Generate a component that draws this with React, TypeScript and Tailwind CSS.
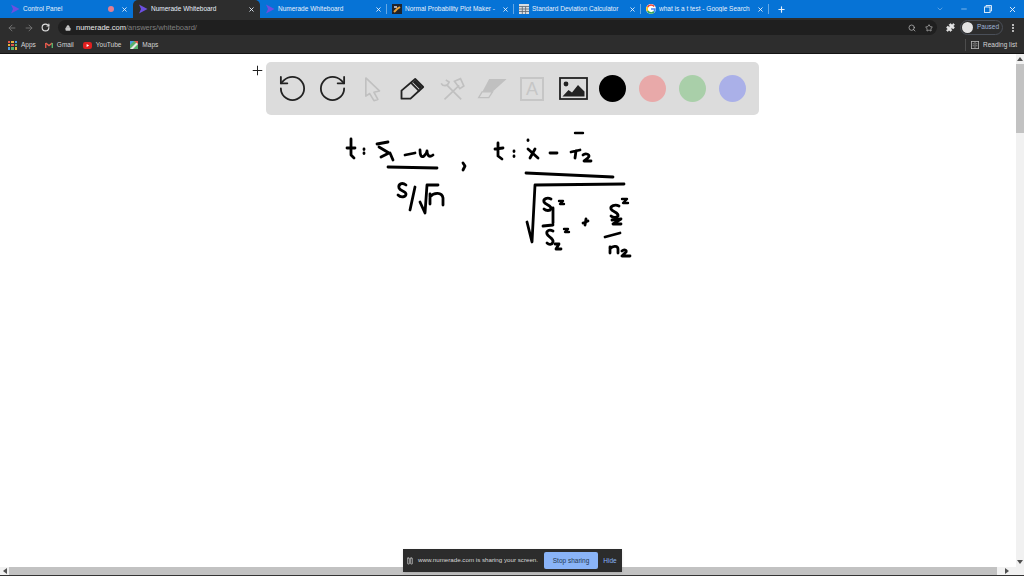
import { ArrowLeft, ArrowRight, ChevronDown, Minus, Plus, RotateCcw, RotateCw, Search, Star, X, Lock, Puzzle, EllipsisVertical, Pause } from "lucide-react";
import type { ReactNode } from "react";

type Tab = { title: string; icon: "numerade" | "plot" | "sheet" | "google"; active?: boolean; width: string; muted?: boolean; divider?: boolean };

const tabs: Tab[] = [
  { title: "Control Panel", icon: "numerade", width: "w-[128px]", muted: true },
  { title: "Numerade Whiteboard", icon: "numerade", width: "w-[127px]", active: true },
  { title: "Numerade Whiteboard", icon: "numerade", width: "w-[127px]", divider: true },
  { title: "Normal Probability Plot Maker -", icon: "plot", width: "w-[127px]", divider: true },
  { title: "Standard Deviation Calculator", icon: "sheet", width: "w-[127px]", divider: true },
  { title: "what is a t test - Google Search", icon: "google", width: "w-[128px]", divider: true },
];

function TabIcon({ icon }: { icon: Tab["icon"] }) {
  if (icon === "numerade") {
    return (
      <svg viewBox="0 0 10 10" className="h-[10px] w-[10px] shrink-0">
        <path d="M1 0.5 9.5 5 1 9.5 3 5Z" fill="#6d4fe0" />
      </svg>
    );
  }
  if (icon === "plot") {
    return (
      <svg viewBox="0 0 10 10" className="h-[10px] w-[10px] shrink-0">
        <rect width="10" height="10" fill="#20242c" />
        <path d="M2 8 5 5 8 3" stroke="#e9a23b" strokeWidth="2" fill="none" />
        <path d="M2 3h3" stroke="#d9d9e6" strokeWidth="1.5" />
      </svg>
    );
  }
  if (icon === "sheet") {
    return (
      <svg viewBox="0 0 10 10" className="h-[10px] w-[10px] shrink-0">
        <rect width="10" height="10" fill="#d8dde2" />
        <path d="M0 2.5h10M0 5h10M0 7.5h10M3.3 2.5v7.5M6.6 2.5v7.5" stroke="#5c6670" strokeWidth="0.8" />
      </svg>
    );
  }
  return (
    <svg viewBox="0 0 10 10" className="h-[10px] w-[10px] shrink-0">
      <circle cx="5" cy="5" r="5" fill="#fff" />
      <path d="M8.2 2.4A4 4 0 0 0 1.6 3" stroke="#ea4335" strokeWidth="1.6" fill="none" />
      <path d="M1.6 3a4 4 0 0 0 0 4" stroke="#fbbc05" strokeWidth="1.6" fill="none" />
      <path d="M1.6 7a4 4 0 0 0 6.4.6" stroke="#34a853" strokeWidth="1.6" fill="none" />
      <path d="M8 7.6A4 4 0 0 0 9 5H5" stroke="#4285f4" strokeWidth="1.6" fill="none" />
    </svg>
  );
}

function TabBar() {
  return (
    <div className="flex h-[18px] items-stretch bg-[#0673d6] pl-[5px] text-[6.5px] text-[#e8f1fb]">
      {tabs.map((tab, i) => (
        <div
          key={i}
          className={
            tab.active
              ? "flex items-center gap-[3px] rounded-t-[5px] bg-[#2d2d2d] pl-[5px] pr-[5px] " + tab.width
              : "relative flex items-center gap-[3px] pl-[5px] pr-[5px] " + tab.width
          }
        >
          <TabIcon icon={tab.icon} />
          <span className="min-w-0 flex-1 truncate leading-none">{tab.title}</span>
          {tab.muted && <span className="mr-[4px] h-[6px] w-[6px] rounded-full bg-[#e07f92]" />}
          <X size={7} strokeWidth={3} className="shrink-0" />
          {tab.divider && <span className="absolute right-0 top-[4px] h-[10px] w-px bg-[#66a9e6]" />}
        </div>
      ))}
      <div className="flex w-[24px] items-center justify-center">
        <Plus size={9} strokeWidth={3} />
      </div>
      <div className="flex-1" />
      <div className="flex w-[96px] shrink-0 items-center">
        <div className="flex w-[24px] justify-center">
          <ChevronDown size={8} className="text-[#7db5ea]" />
        </div>
        <div className="flex w-[24px] justify-center">
          <Minus size={8} className="text-[#b9d8f5]" />
        </div>
        <div className="flex w-[24px] justify-center">
          <svg viewBox="0 0 8 8" className="h-[8px] w-[8px]" fill="none" stroke="#d6e8f9" strokeWidth="1">
            <rect x="0.5" y="2" width="5.5" height="5.5" />
            <path d="M2 2V0.5H7.5V6H6" />
          </svg>
        </div>
        <div className="flex w-[24px] justify-center">
          <X size={9} strokeWidth={2.5} />
        </div>
      </div>
    </div>
  );
}

function AddressBar() {
  return (
    <div className="flex h-[19px] items-center bg-[#2d2d2d] pl-[7px] pr-[6px] text-[#c8c8c8]">
      <div className="flex w-[51px] shrink-0 items-center gap-[7px]">
        <ArrowLeft size={10} className="text-[#7c7c7c]" />
        <ArrowRight size={10} className="text-[#7c7c7c]" />
        <RotateCw size={9} strokeWidth={3} className="text-[#e0e0e0]" />
      </div>
      <div className="flex h-[15px] min-w-0 flex-1 items-center justify-between rounded-full bg-[#1f1f1f] pl-[7px] pr-[4px] text-[7.5px]">
        <div className="flex items-center gap-[5px]">
          <Lock size={6} fill="currentColor" />
          <span className="leading-none">
            <span className="text-[#e8e8e8]">numerade.com</span>
            <span className="text-[#7f7f7f]">/answers/whiteboard/</span>
          </span>
        </div>
        <div className="flex items-center gap-[9px]">
          <Search size={8} />
          <Star size={8} />
        </div>
      </div>
      <div className="ml-[9px] flex items-center gap-[5px]">
        <Puzzle size={9} fill="#e4e4e4" className="text-[#e4e4e4]" />
        <div className="flex h-[15px] w-[43px] items-center gap-[4px] rounded-full border border-[#4a4f58] pl-[1px] text-[6.5px] text-[#9fb4d8]">
          <span className="h-[11px] w-[11px] rounded-full bg-[#e4e4e4]" />
          <span className="leading-none">Paused</span>
        </div>
        <EllipsisVertical size={10} strokeWidth={3} className="text-[#e4e4e4]" />
      </div>
    </div>
  );
}

function Bookmark({ icon, label }: { icon: ReactNode; label: string }) {
  return (
    <div className="flex items-center gap-[4px]">
      {icon}
      <span className="leading-none">{label}</span>
    </div>
  );
}

function BookmarksBar() {
  return (
    <div className="flex h-[17px] items-center gap-[9px] border-b border-[#141414] bg-[#2d2d2d] pl-[8px] pr-[7px] text-[6.5px] text-[#d4d4d4]">
      <Bookmark
        label="Apps"
        icon={
          <div className="grid h-[9px] w-[9px] grid-cols-3 gap-[1px]">
            {["#e0554a", "#e8b23c", "#4a9ae0", "#e8b23c", "#e0554a", "#58b06a", "#4a9ae0", "#58b06a", "#e8b23c"].map((c, i) => (
              <span key={i} style={{ backgroundColor: c }} />
            ))}
          </div>
        }
      />
      <Bookmark
        label="Gmail"
        icon={
          <svg viewBox="0 0 8 6" className="h-[6px] w-[8px]" fill="none" strokeWidth="1.4">
            <path d="M.7 6V1" stroke="#e0554a" />
            <path d="M.7 1 4 3.6 7.3 1" stroke="#e8604f" />
            <path d="M7.3 1v5" stroke="#58b06a" />
          </svg>
        }
      />
      <Bookmark
        label="YouTube"
        icon={
          <svg viewBox="0 0 9 7" className="h-[7px] w-[9px]">
            <rect width="9" height="7" rx="2.2" fill="#e02020" />
            <path d="M3.6 2 6.2 3.5 3.6 5Z" fill="#fff" />
          </svg>
        }
      />
      <Bookmark
        label="Maps"
        icon={
          <svg viewBox="0 0 8 8" className="h-[8px] w-[8px]">
            <rect width="8" height="8" fill="#58b06a" />
            <path d="M0 8 8 0V3L3 8Z" fill="#e8e8e8" />
            <path d="M4 0H8V3Z" fill="#e0554a" />
            <path d="M0 0H4L0 4Z" fill="#4a9ae0" />
          </svg>
        }
      />
      <div className="flex-1" />
      <div className="flex h-[12px] items-center gap-[4px] border-l border-[#4c4c4c] pl-[5px]">
        <svg viewBox="0 0 10 10" className="h-[8px] w-[8px]">
          <rect x="0.5" y="0.5" width="9" height="9" fill="none" stroke="#b8b8b8" />
          <path d="M5 1v8M2 3.5h2M6 3.5h2M2 6h2M6 6h2" stroke="#b8b8b8" strokeWidth="0.8" />
        </svg>
        <span className="leading-none">Reading list</span>
      </div>
    </div>
  );
}

function ToolCell({ children }: { children: ReactNode }) {
  return <div className="flex h-[30px] w-[40px] items-center justify-center">{children}</div>;
}

function Toolbar() {
  const faded = "#c0c0c0";
  return (
    <div className="flex h-[53px] w-[493px] items-center rounded-[5px] bg-[#dcdcdc] pl-[6px]">
      <ToolCell>
        <RotateCcw size={31} strokeWidth={1.4} className="text-[#222]" />
      </ToolCell>
      <ToolCell>
        <RotateCw size={31} strokeWidth={1.4} className="text-[#222]" />
      </ToolCell>
      <ToolCell>
        <svg viewBox="350 60 60 80" className="h-[26px] w-[20px]" fill="none" stroke={faded} strokeWidth="5" strokeLinejoin="round">
          <path d="M361 66 403 106 386 110 398 132 386 136 373 114 361 122Z" />
        </svg>
      </ToolCell>
      <ToolCell>
        <svg viewBox="462 62 80 78" className="h-[26px] w-[27px]" fill="none" stroke="#222" strokeWidth="5.5" strokeLinejoin="round">
          <path d="M469 130V106L510 71 534 95 496 130Z" />
          <path d="M497 82 523 108" />
          <path d="M510 74 531 95 524 102 503 81Z" fill="#222" stroke="none" />
        </svg>
      </ToolCell>
      <ToolCell>
        <svg viewBox="582 62 80 78" className="h-[26px] w-[27px]" fill="none" stroke={faded} strokeWidth="5">
          <path d="M606 90 648 132M642 90 598 132" />
          <path d="M588 84C592 92 606 96 612 80L602 74" />
          <path d="M628 78 646 70 656 92 644 100Z" />
        </svg>
      </ToolCell>
      <ToolCell>
        <svg viewBox="700 66 92 68" className="h-[23px] w-[31px]">
          <path d="M736 72H788L746 110H716Z" fill={faded} />
          <path d="M715 110H746L735 127H705Z" fill="none" stroke={faded} strokeWidth="4" />
        </svg>
      </ToolCell>
      <ToolCell>
        <div className="flex h-[24px] w-[24px] items-center justify-center border-2 border-[#c6c6c6] font-['Liberation_Sans',sans-serif] text-[18px] leading-none text-[#c6c6c6]">
          A
        </div>
      </ToolCell>
      <ToolCell>
        <svg viewBox="0 0 29 23" className="ml-[2px] h-[23px] w-[29px]" fill="none">
          <rect x="1" y="1" width="27" height="21" stroke="#222" strokeWidth="1.8" />
          <circle cx="7" cy="7" r="2.4" fill="#222" />
          <path d="M3.5 19.5 9.5 13 13 15.5 19 8 25.5 14.5V19.5Z" fill="#222" />
        </svg>
      </ToolCell>
      {["bg-black", "bg-[#e8a9a9]", "bg-[#a9cfa9]", "bg-[#aab0e8]"].map((color) => (
        <ToolCell key={color}>
          <span className={"h-[27px] w-[27px] rounded-full " + color} />
        </ToolCell>
      ))}
    </div>
  );
}

// freehand ink on the board, coordinates are page pixels
function Ink() {
  return (
    <svg viewBox="335 125 310 140" className="h-[140px] w-[310px]" fill="none" stroke="#000" strokeWidth="2.8" strokeLinecap="round" strokeLinejoin="round">
      <path d="M351 139 351 155 354 158M347 148H355" />
      <path d="M364 149v.5M364 153v.5" />
      <path d="M377 144 388 142M379 147 389 153 381 157M390 153 393 160" />
      <path d="M405 155 415 153" />
      <path d="M420 150C420 155 421 158 424 156 426 154 427 152 427 151 427 155 429 158 433 155" />
      <path d="M388 167 437 168" />
      <path d="M406 185C402 182 398 184 399 188 400 191 406 191 406 194 406 197 401 198 398 195" />
      <path d="M415 187 410 210" />
      <path d="M420 202 425 213 427 185 438 185" />
      <path d="M430 204V194M430 197C434 192 442 192 443 198V205" />
      <path d="M463 163 465 166 463 170" />
      <path d="M498 143 498 156 502 159M495 149 503 148" />
      <path d="M514 151v.5M514 156v.5" />
      <path d="M528 140v.5" />
      <path d="M528 149 538 158M530 158 535 149" />
      <path d="M550 153 557 153" />
      <path d="M575 133 583 133" strokeWidth="2.4" />
      <path d="M571 152 580 150M576 151 575 158" />
      <path d="M583 155C585 153 589 154 589 156 589 158 585 160 584 161L591 161" />
      <path d="M526 173 613 177" />
      <path d="M527 222 532 242 535 185 624 184" />
      <path d="M551 199C547 197 543 199 544 202 545 205 552 205 551 209 550 211 546 211 544 209" />
      <path d="M559 201 563 201 560 204 564 204" strokeWidth="2.4" />
      <path d="M553 208 553 223M543 226 553 225" />
      <path d="M553 231C549 229 546 231 547 234 548 237 554 238 553 242 552 245 549 245 547 243" />
      <path d="M555 244 559 244 556 249 561 249" />
      <path d="M564 229 568 229 565 232 569 232" strokeWidth="2.4" />
      <path d="M583 223 588 221M586 219 585 225" />
      <path d="M619 206C615 204 610 206 611 209 612 212 619 212 618 216 617 218 613 218 611 216" />
      <path d="M612 220 621 219 613 224 621 224" />
      <path d="M622 199 627 199 623 203 628 203" strokeWidth="2.4" />
      <path d="M605 237 620 233" />
      <path d="M610 253V247M610 249C613 245 618 246 618 249V253" />
      <path d="M622 251C624 249 627 250 626 252L622 256H630" />
    </svg>
  );
}

function ShareNotice() {
  return (
    <div className="flex h-[23px] w-[219px] items-center bg-[#2c2c2c] pl-[3px] text-[6.5px] text-[#d8d8d8] shadow">
      <Pause size={8} className="mr-[2px] shrink-0" />
      <span className="flex-1 whitespace-nowrap pl-[2px] text-[6.2px] leading-none">www.numerade.com is sharing your screen.</span>
      <span className="flex h-[17px] w-[54px] shrink-0 items-center justify-center rounded-[2px] bg-[#8ab4f8] text-[#23374f]">Stop sharing</span>
      <span className="w-[24px] shrink-0 text-center text-[#8ab4f8]">Hide</span>
    </div>
  );
}

export default function App() {
  return (
    <div className="flex h-[576px] w-[1024px] flex-col overflow-hidden bg-white font-['Liberation_Sans',Arial,sans-serif]">
      <TabBar />
      <AddressBar />
      <BookmarksBar />
      <div className="relative flex min-h-0 flex-1 flex-col">
        <div className="flex min-h-0 flex-1">
          <main className="relative min-w-0 flex-1 bg-white">
            <div className="absolute left-[266px] top-[8px]">
              <Toolbar />
            </div>
            <Plus size={15} strokeWidth={1.6} className="absolute left-[250px] top-[9px] text-[#222]" />
            <div className="absolute left-[335px] top-[71px]">
              <Ink />
            </div>
          </main>
          <aside className="flex w-[8px] shrink-0 flex-col items-center bg-[#f1f1f1] pt-[3px]">
            <svg viewBox="0 0 6 4" className="h-[4px] w-[6px]">
              <path d="M3 0 6 4H0Z" fill="#505050" />
            </svg>
            <div className="mt-[3px] h-[69px] w-full bg-[#c2c2c2]" />
            <div className="flex-1" />
            <svg viewBox="0 0 6 4" className="mb-[3px] h-[4px] w-[6px]">
              <path d="M0 0H6L3 4Z" fill="#505050" />
            </svg>
          </aside>
        </div>
        <div className="flex h-[9px] shrink-0 items-stretch border-b border-[#333] bg-[#f1f1f1]">
          <div className="flex w-[9px] items-center justify-center">
            <svg viewBox="0 0 4 6" className="h-[6px] w-[4px]">
              <path d="M0 3 4 0V6Z" fill="#505050" />
            </svg>
          </div>
          <div className="w-[988px] bg-[#c2c2c2]" />
          <div className="flex-1" />
          <div className="flex w-[19px] items-center justify-start">
            <svg viewBox="0 0 4 6" className="h-[6px] w-[4px]">
              <path d="M4 3 0 0V6Z" fill="#505050" />
            </svg>
          </div>
        </div>
        <div className="absolute bottom-[4px] left-[403px]">
          <ShareNotice />
        </div>
      </div>
    </div>
  );
}
